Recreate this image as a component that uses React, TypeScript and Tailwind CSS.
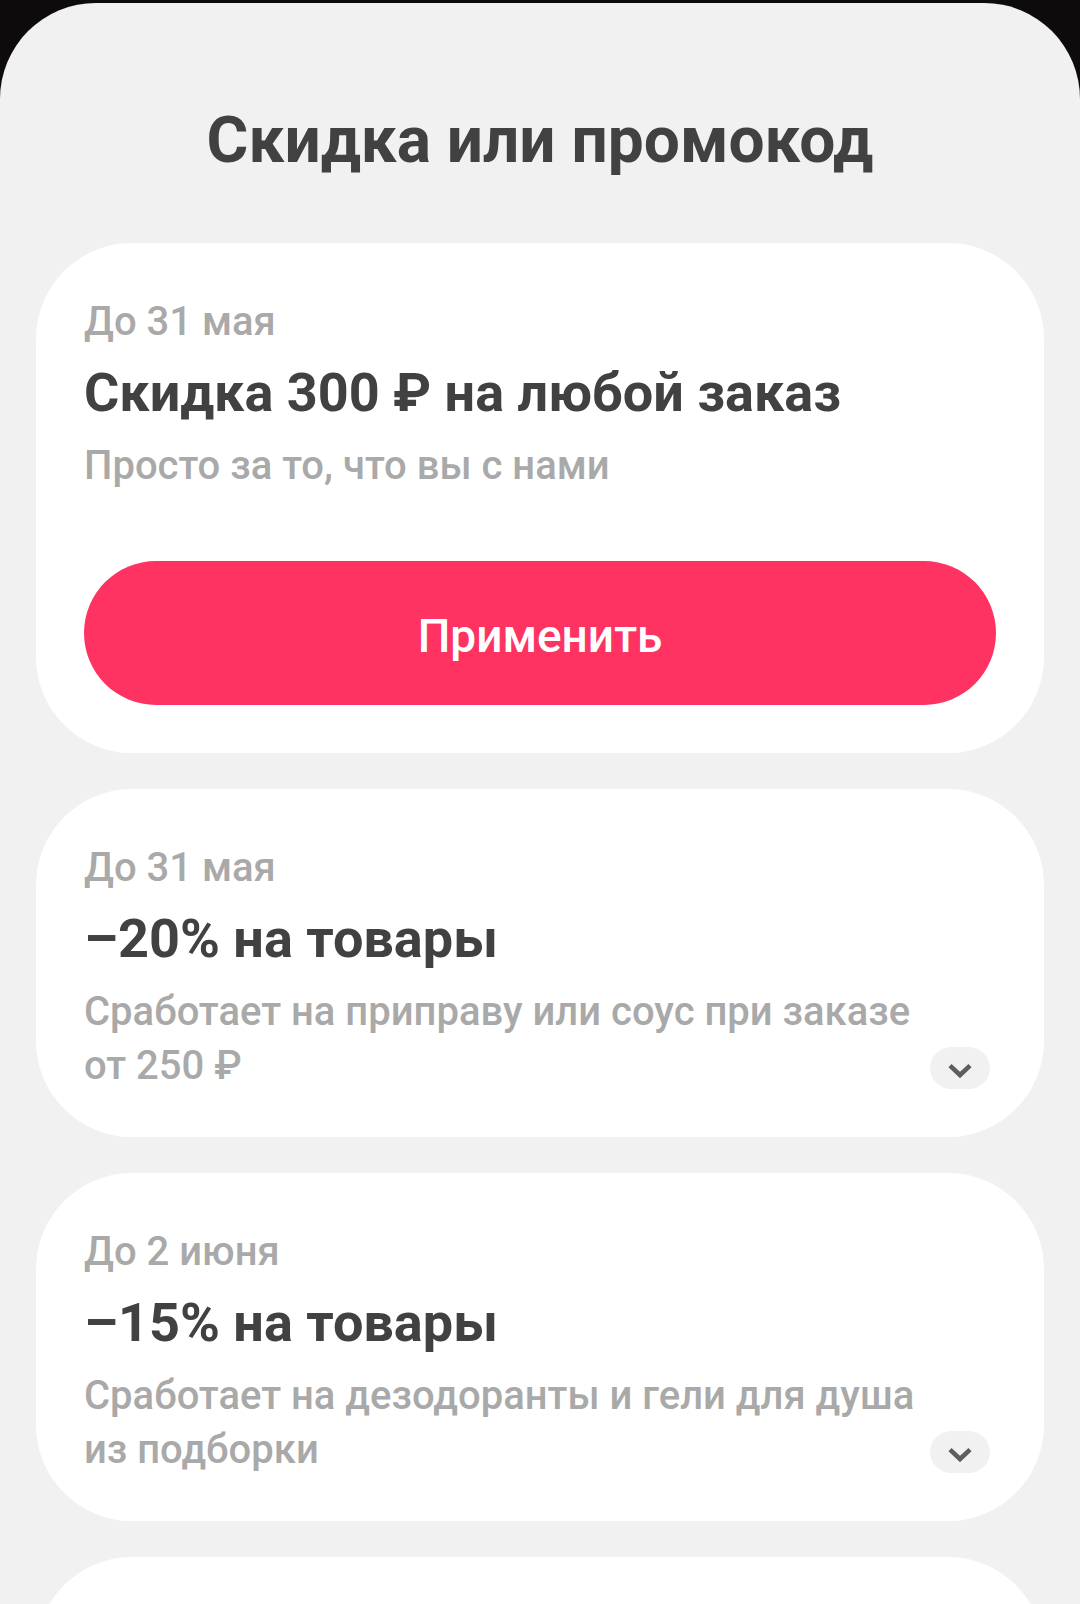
import React from "react";

type Offer = { until: string; title: string; text: string[]; action?: boolean };

const offers: Offer[] = [
  { until: "До 31 мая", title: "Скидка 300 ₽ на любой заказ", text: ["Просто за то, что вы с нами"], action: true },
  { until: "До 31 мая", title: "–20% на товары", text: ["Сработает на приправу или соус при заказе", "от 250 ₽"] },
  { until: "До 2 июня", title: "–15% на товары", text: ["Сработает на дезодоранты и гели для душа", "из подборки"] },
];

function OfferCard({ offer }: { offer: Offer }) {
  return (
    <article className={`relative rounded-[96px] bg-white px-12 pt-[52px] ${offer.action ? "pb-12" : "pb-11"}`}>
      <p className="text-[40px] leading-[54px] font-medium text-[#a9a9a9]">{offer.until}</p>
      <h2 className="mt-2 text-[54px] leading-[72px] font-bold text-[#414141]">{offer.title}</h2>
      <p className="mt-[10px] text-[40px] leading-[54px] font-medium text-[#a9a9a9]">
        {offer.text.map((line) => (
          <span key={line} className="block">{line}</span>
        ))}
      </p>
      {offer.action ? (
        <button
          type="button"
          className="mt-[68px] flex h-36 w-full items-center justify-center rounded-full bg-[#ff3361] pt-1.5 text-[46px] font-medium text-white"
        >
          Применить
        </button>
      ) : (
        <button
          type="button"
          aria-label="Подробнее"
          className="absolute right-[54px] bottom-12 flex h-[42px] w-[60px] items-center justify-center rounded-full bg-[#f1f1f1] pt-1.5"
        >
          <svg viewBox="0 0 24 16" className="h-4 w-6" fill="none" stroke="#5e5e5e" strokeWidth="4.6">
            <path d="M2 2.6L12 12L22 2.6" />
          </svg>
        </button>
      )}
    </article>
  );
}

export default function App() {
  return (
    <div className="h-screen overflow-hidden bg-[#0d0b0c] pt-[3px] font-['Roboto',sans-serif]">
      <main className="h-full overflow-hidden rounded-t-[96px] bg-[#f1f1f1] px-9 pt-[94px]">
        <h1 className="text-center text-[64px] leading-[88px] font-bold text-[#414141]">Скидка или промокод</h1>
        <div className="mt-[58px] flex flex-col gap-9">
          {offers.map((offer) => (
            <OfferCard key={offer.title} offer={offer} />
          ))}
          <div className="h-[348px] rounded-[96px] bg-white" />
        </div>
      </main>
    </div>
  );
}
